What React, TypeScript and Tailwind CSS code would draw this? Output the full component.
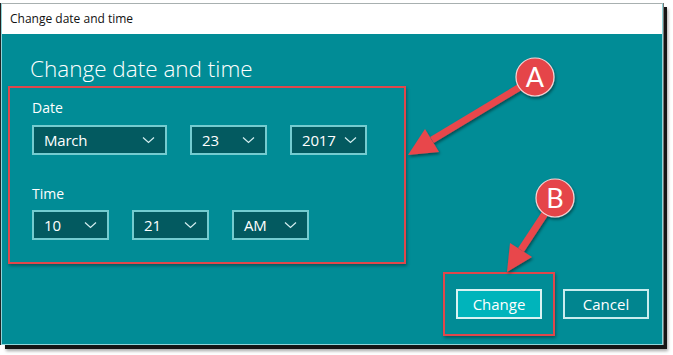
const font = { fontFamily: '"Open Sans", "Noto Sans", sans-serif' };

function Chevron() {
  return (
    <svg width="13" height="8" viewBox="0 0 13 8" fill="none" className="shrink-0 text-[#d5eff0]">
      <path d="M1 1.5 L6.5 6.5 L12 1.5" stroke="currentColor" strokeWidth="1.2" />
    </svg>
  );
}

function Select({ value, width }: { value: string; width: string }) {
  return (
    <div
      className={`${width} h-[30px] flex items-center justify-between gap-2 pl-[10px] pr-[10px] bg-[#035a60] border-2 border-[#74ccd0] text-white text-[15px] tracking-[-0.2px]`}
    >
      <span>{value}</span>
      <Chevron />
    </div>
  );
}

function Annotations() {
  return (
    <svg className="absolute inset-0 pointer-events-none" width="673" height="355" viewBox="0 0 673 355">
      <defs>
        <filter id="sh" x="-20%" y="-20%" width="140%" height="140%">
          <feDropShadow dx="1" dy="2" stdDeviation="1.5" floodColor="#000" floodOpacity="0.45" />
        </filter>
      </defs>
      <g filter="url(#sh)">
        {/* arrow A */}
        <line x1="520" y1="87" x2="432" y2="140" stroke="#e8474b" strokeWidth="7" />
        <polygon points="408,155 425,129 439,152" fill="#e8474b" />
        {/* arrow B */}
        <line x1="546" y1="212" x2="521" y2="250" stroke="#e8474b" strokeWidth="7" />
        <polygon points="507,272 510,243 532,257" fill="#e8474b" />
        <circle cx="535" cy="77" r="19" fill="#e5444a" stroke="#f7d5d6" strokeWidth="1.2" />
        <circle cx="555" cy="198" r="19" fill="#e5444a" stroke="#f7d5d6" strokeWidth="1.2" />
      </g>
      <text x="535" y="87" textAnchor="middle" fill="#fff" fontSize="27" fontFamily="Lato, 'Open Sans', sans-serif">A</text>
      <text x="555" y="208" textAnchor="middle" fill="#fff" fontSize="27" fontFamily="Lato, 'Open Sans', sans-serif">B</text>
    </svg>
  );
}

export default function App() {
  return (
    <div className="relative w-[673px] h-[355px] bg-white overflow-hidden" style={font}>
      <div className="pt-[3px] pl-[1px]">
        {/* Window */}
        <div className="w-[662px] h-[342px] flex flex-col border border-[#8fd6da] border-t-[#a8b0b0] shadow-[1px_0_0_#777,4px_4px_0_#151515,5px_6px_3px_rgba(0,0,0,0.35),-1px_0_0_#222]">
          {/* Title bar */}
          <div className="h-[30px] bg-white flex items-center pl-[8px] text-[12px] text-[#111]">
            Change date and time
          </div>

          {/* Body */}
          <div className="flex-1 bg-[#018c96] flex flex-col">
            <h1 className="mt-[20px] ml-[28px] text-[22.5px] leading-[30px] font-light text-white">
              Change date and time
            </h1>

            {/* Highlighted date/time group */}
            <div className="mt-[2px] ml-[6px] w-[398px] h-[178px] border-2 border-[#e0474b] shadow-[1px_2px_3px_rgba(0,0,0,0.35)] pl-[22px] pt-[10px]">
              <div className="text-white text-[14px] leading-[20px]">Date</div>
              <div className="mt-[7px] flex gap-[23px]">
                <Select value="March" width="w-[135px]" />
                <Select value="23" width="w-[77px]" />
                <Select value="2017" width="w-[77px]" />
              </div>
              <div className="mt-[29px] text-white text-[14px] leading-[20px]">Time</div>
              <div className="mt-[6px] flex gap-[23px]">
                <Select value="10" width="w-[77px]" />
                <Select value="21" width="w-[77px]" />
                <Select value="AM" width="w-[77px]" />
              </div>
            </div>

            {/* Buttons */}
            <div className="mt-auto mb-[8px] flex justify-end items-center gap-[8px] pr-[13px]">
              <div className="w-[112px] h-[64px] border-2 border-[#e0474b] shadow-[1px_2px_3px_rgba(0,0,0,0.35)] flex items-center justify-center">
                <button className="w-[86px] h-[30px] bg-[#00b4bb] border-2 border-[#d9f3f3] text-white text-[15px]">
                  Change
                </button>
              </div>
              <button className="w-[86px] h-[30px] bg-[#01858f] border-2 border-[#c9ecee] text-white text-[15px]">
                Cancel
              </button>
            </div>
          </div>
        </div>
      </div>
      <Annotations />
    </div>
  );
}
